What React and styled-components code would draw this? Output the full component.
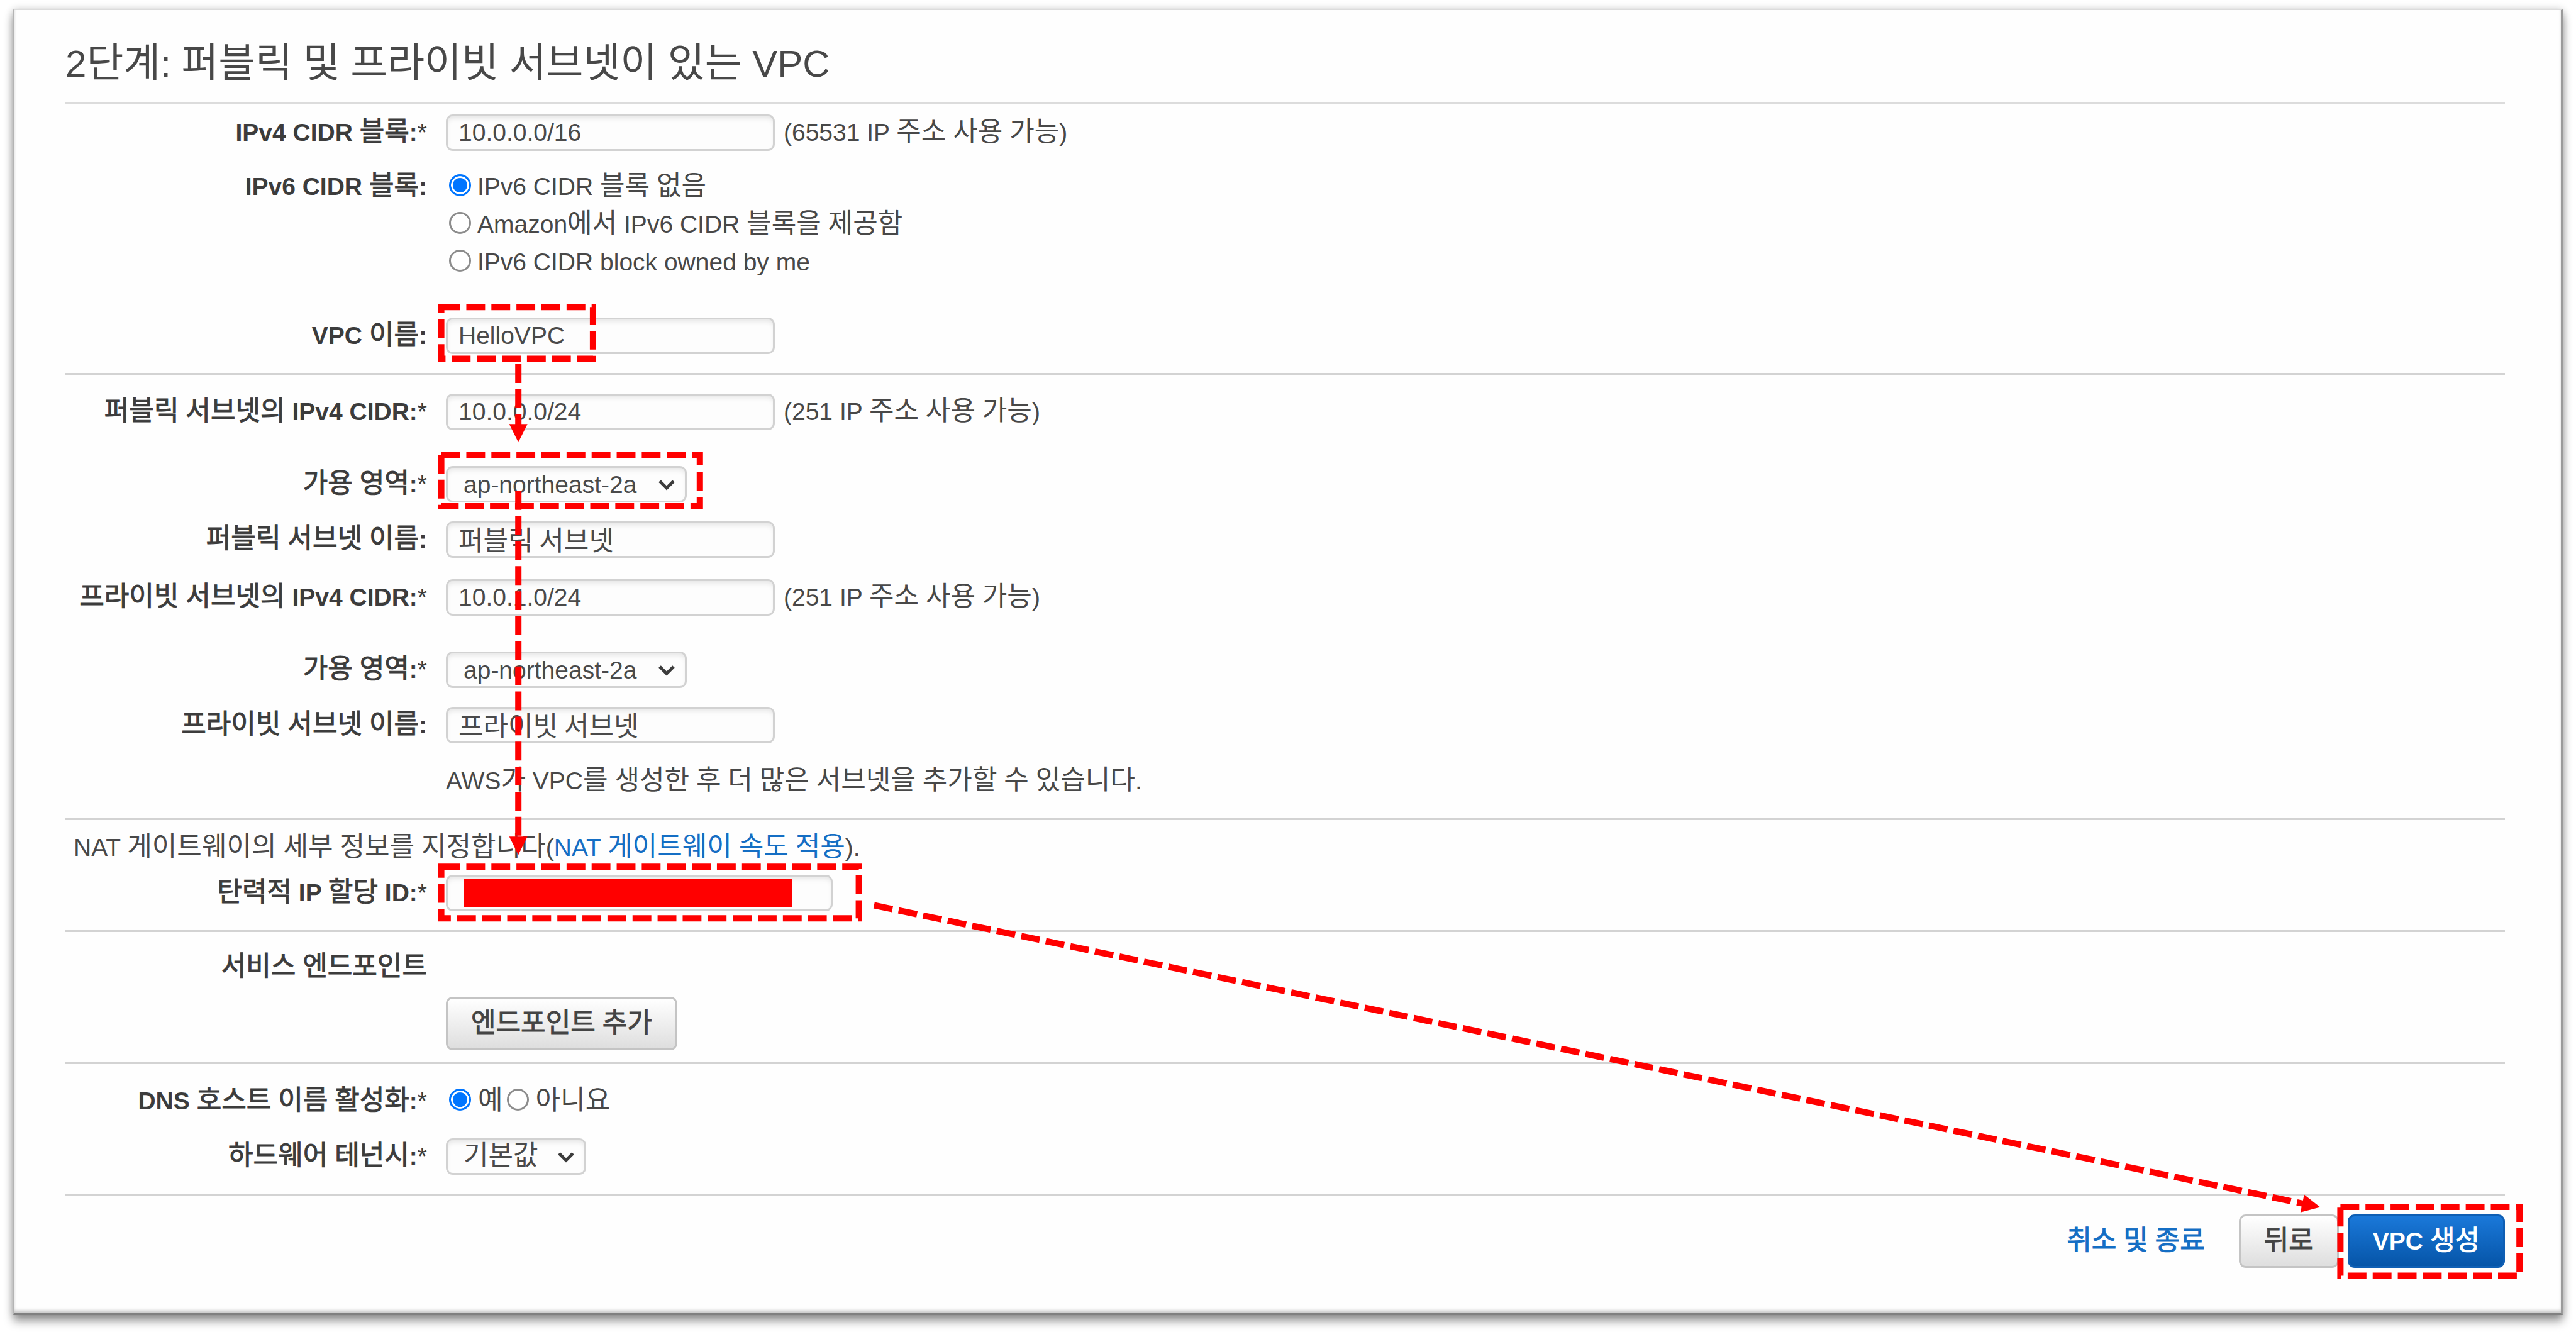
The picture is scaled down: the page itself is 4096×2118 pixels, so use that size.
import React, { useId } from "react";
import styled, { createGlobalStyle } from "styled-components";

const LATIN = `"Liberation Sans", Arial, "Noto Sans CJK KR", sans-serif`;
const HANGUL = `"Noto Sans CJK KR", sans-serif`;
const RED = "#ff0000";

const GlobalStyle = createGlobalStyle`
  *, *::before, *::after { box-sizing: border-box; }
  body {
    --hangul-size: 43px;
    margin: 0;
    background: #fff;
    color: #484848;
    font-family: ${LATIN};
    font-size: 39px;
    line-height: 58px;
  }
`;

const Page = styled.div`
  position: relative;
  display: flex;
  min-height: 100vh;
  padding: 15px 21px 27px;
  overflow: hidden;
`;

const Panel = styled.main`
  flex: 1;
  padding: 46px 89px 0 81px;
  background: #fefefe;
  border: 1px solid #dcdcdc;
  border-left: 2px solid #b4b4b4;
  border-right: 3px solid #9a9a9a;
  border-bottom: 3px solid #808080;
  box-shadow:
    0 10px 14px rgba(0, 0, 0, 0.38),
    0 0 12px rgba(0, 0, 0, 0.2),
    inset 0 -5px 5px -1px rgba(0, 0, 0, 0.22);
`;

const Hangul = styled.span`
  font-family: ${HANGUL};
  font-size: var(--hangul-size);
  font-weight: 400;
  line-height: 1;
  -webkit-text-stroke: ${(p) => (p.$strong ? "1px currentColor" : "0")};
`;

const Title = styled.h1`
  --hangul-size: 64px;
  margin: 0;
  padding-bottom: 20px;
  border-bottom: 3px solid #dcdcdc;
  font-size: 60px;
  font-weight: 400;
  line-height: 80px;
`;

const Section = styled.section`
  display: flex;
  flex-direction: column;
  padding: ${(p) => p.$top || 30}px 0 ${(p) => p.$bottom || 30}px;
  border-bottom: 3px solid #d3d3d3;
`;

const RowGrid = styled.div`
  display: grid;
  grid-template-columns: 575px 1fr;
  column-gap: 30px;
  align-items: start;
  margin-top: ${(p) => p.$gap || 0}px;
`;

const Caption = styled.label`
  grid-column: 1;
  text-align: right;
  font-weight: 700;
  color: #3c3c3c;
  line-height: ${(p) => p.$line || 58}px;
`;

const Star = styled.span`
  font-weight: 400;
`;

const Field = styled.div`
  grid-column: 2;
  display: flex;
  align-items: center;
  gap: 14px;
`;

const boxed = `
  height: 58px;
  margin: 0;
  border: 3px solid #d2d2d2;
  border-radius: 11px;
  background: #fdfdfd;
  box-shadow: inset 0 6px 8px -3px rgba(0, 0, 0, 0.1);
`;

const TextInput = styled.input`
  ${boxed}
  width: ${(p) => (p.$wide ? 615 : 523)}px;
  padding: 0 17px ${(p) => (p.$hangul ? 4 : 0)}px;
  color: #4a4a4a;
  font-family: ${(p) => (p.$hangul ? HANGUL : LATIN)};
  font-size: ${(p) => (p.$hangul ? 43 : 39)}px;
`;

const SelectWrap = styled.div`
  ${boxed}
  display: grid;
  width: ${(p) => (p.$short ? 223 : 383)}px;
  grid-template-rows: 52px;
  align-items: center;

  & > * { grid-area: 1 / 1; }
`;

const SelectBox = styled.select`
  align-self: end;
  width: 100%;
  height: ${(p) => (p.$hangul ? 64 : 52)}px;
  padding: 0 25px;
  border: 0;
  background: transparent;
  appearance: none;
  color: #4a4a4a;
  font-family: ${(p) => (p.$hangul ? HANGUL : LATIN)};
  font-size: ${(p) => (p.$hangul ? 43 : 39)}px;
`;

const Chevron = styled.svg`
  justify-self: end;
  width: 28px;
  height: 20px;
  margin-right: 15px;
  margin-top: 2px;
  pointer-events: none;
`;

const RadioList = styled.div`
  grid-column: 2;
  display: flex;
  flex-direction: ${(p) => (p.$inline ? "row" : "column")};
  padding-left: 5px;
  gap: ${(p) => (p.$inline ? 6 : 0)}px;
`;

const RadioLabel = styled.label`
  display: flex;
  align-items: center;
  gap: ${(p) => (p.$tight ? 11 : 10)}px;
  line-height: ${(p) => (p.$tight ? 58 : 60)}px;
`;

const Radio = styled.input.attrs({ type: "radio" })`
  flex: none;
  appearance: none;
  width: 35px;
  height: 35px;
  margin: 0 0 6px;
  border: 3px solid #8c8c8c;
  border-radius: 50%;
  background: #fff;

  &:checked {
    border-color: #0075ff;
    background: #0075ff;
    box-shadow: inset 0 0 0 3px #fff;
  }
`;

const Note = styled.p`
  grid-column: 2;
  margin: 0;
`;

const NatNote = styled.p`
  margin: 0;
  padding-left: 13px;
`;

const Link = styled.a`
  color: #146ec4;
  text-decoration: none;
`;

const Button = styled.button`
  height: 85px;
  padding: 0 37px;
  border: 3px solid ${(p) => (p.$primary ? "#0f5fb4" : "#c4c4c4")};
  border-radius: 11px;
  background: ${(p) =>
    p.$primary
      ? "linear-gradient(#1a78d9, #0655a8)"
      : "linear-gradient(#ffffff, #dedede)"};
  color: ${(p) => (p.$primary ? "#fff" : "#444")};
  font-family: ${LATIN};
  font-size: 39px;
  font-weight: 700;
  line-height: 58px;
  white-space: nowrap;
`;

const Footer = styled.footer`
  display: flex;
  justify-content: flex-end;
  align-items: center;
  padding-top: 30px;
  gap: 14px;
`;

const Cancel = styled.div`
  margin-right: 40px;
`;

const Overlay = styled.svg`
  position: absolute;
  top: 0;
  left: 0;
  width: 100%;
  height: auto;
  pointer-events: none;
`;

function Text({ strong, children }) {
  return children
    .split(/([\uac00-\ud7a3]+)/)
    .map((part, i) =>
      i % 2 ? <Hangul key={i} $strong={strong}>{part}</Hangul> : part
    );
}

function Row({ label, required, gap, line, group, children }) {
  const id = useId();
  return (
    <RowGrid $gap={gap}>
      <Caption
        as={group ? "span" : "label"}
        id={`${id}-label`}
        htmlFor={group ? undefined : id}
        $line={line}
      >
        <Text strong>{label}</Text>
        {required && <Star>*</Star>}
      </Caption>
      {children(id)}
    </RowGrid>
  );
}

function InputRow({ value, hangul, wide, hint, ...row }) {
  return (
    <Row {...row}>
      {(id) => (
        <Field>
          <TextInput id={id} type="text" defaultValue={value} $hangul={hangul} $wide={wide} />
          {hint && <span><Text>{hint}</Text></span>}
        </Field>
      )}
    </Row>
  );
}

function SelectRow({ value, short, ...row }) {
  return (
    <Row {...row}>
      {(id) => (
        <SelectWrap $short={short}>
          <SelectBox id={id} $hangul={short}>
            <option>{value}</option>
          </SelectBox>
          <Chevron viewBox="0 0 28 20" aria-hidden="true">
            <path d="M3 4 L14 15 L25 4" fill="none" stroke="#3c3c3c" strokeWidth="5" />
          </Chevron>
        </SelectWrap>
      )}
    </Row>
  );
}

function RadioRow({ name, options, inline, ...row }) {
  return (
    <Row {...row} group>
      {(id) => (
        <RadioList role="radiogroup" aria-labelledby={`${id}-label`} $inline={inline}>
          {options.map((option, i) => (
            <RadioLabel key={option} $tight={inline}>
              <Radio name={name} defaultChecked={i === 0} />
              <span><Text>{option}</Text></span>
            </RadioLabel>
          ))}
        </RadioList>
      )}
    </Row>
  );
}

function DashBox({ x1, y1, x2, y2 }) {
  return <rect x={x1} y={y1} width={x2 - x1} height={y2 - y1} />;
}

function Arrow({ from, to }) {
  const dx = to[0] - from[0];
  const dy = to[1] - from[1];
  const length = Math.hypot(dx, dy);
  const angle = (Math.atan2(dy, dx) * 180) / Math.PI;
  return (
    <g transform={`translate(${from[0]} ${from[1]}) rotate(${angle})`}>
      <line x1="0" y1="0" x2={length - 26} y2="0" />
      <path
        d={`M${length} 0 L${length - 29} -14.5 V14.5 Z`}
        fill={RED}
        stroke="none"
      />
    </g>
  );
}

export default function App() {
  return (
    <>
      <GlobalStyle />
      <Page>
        <Panel>
          <Title><Text>2단계: 퍼블릭 및 프라이빗 서브넷이 있는 VPC</Text></Title>

          <Section $top={17}>
            <InputRow label="IPv4 CIDR 블록:" required value="10.0.0.0/16" hint="(65531 IP 주소 사용 가능)" />
            <RadioRow
              label="IPv6 CIDR 블록:"
              name="ipv6"
              gap={27}
              line={60}
              options={[
                "IPv6 CIDR 블록 없음",
                "Amazon에서 IPv6 CIDR 블록을 제공함",
                "IPv6 CIDR block owned by me",
              ]}
            />
            <InputRow label="VPC 이름:" value="HelloVPC" gap={58} />
          </Section>

          <Section>
            <InputRow label="퍼블릭 서브넷의 IPv4 CIDR:" required value="10.0.0.0/24" hint="(251 IP 주소 사용 가능)" />
            <SelectRow label="가용 영역:" required value="ap-northeast-2a" gap={57} />
            <InputRow label="퍼블릭 서브넷 이름:" value="퍼블릭 서브넷" hangul gap={30} />
            <InputRow label="프라이빗 서브넷의 IPv4 CIDR:" required value="10.0.1.0/24" hint="(251 IP 주소 사용 가능)" gap={34} />
            <SelectRow label="가용 영역:" required value="ap-northeast-2a" gap={57} />
            <InputRow label="프라이빗 서브넷 이름:" value="프라이빗 서브넷" hangul gap={30} />
            <RowGrid $gap={31}>
              <Note><Text>AWS가 VPC를 생성한 후 더 많은 서브넷을 추가할 수 있습니다.</Text></Note>
            </RowGrid>
          </Section>

          <Section $top={15}>
            <NatNote>
              <Text>NAT 게이트웨이의 세부 정보를 지정합니다(</Text>
              <Link href="#pricing"><Text>NAT 게이트웨이 속도 적용</Text></Link>).
            </NatNote>
            <InputRow label="탄력적 IP 할당 ID:" required value="" wide gap={14} />
          </Section>

          <Section $top={27} $bottom={19}>
            <Row label="서비스 엔드포인트" group>{() => null}</Row>
            <RowGrid $gap={18}>
              <Field>
                <Button type="button"><Text strong>엔드포인트 추가</Text></Button>
              </Field>
            </RowGrid>
          </Section>

          <Section>
            <RadioRow label="DNS 호스트 이름 활성화:" required name="dns" inline options={["예", "아니요"]} />
            <SelectRow label="하드웨어 테넌시:" required value="기본값" short gap={30} />
          </Section>

          <Footer>
            <Cancel><Link href="#cancel"><Text strong>취소 및 종료</Text></Link></Cancel>
            <Button type="button"><Text strong>뒤로</Text></Button>
            <Button type="submit" $primary><Text strong>VPC 생성</Text></Button>
          </Footer>
        </Panel>

        <Overlay viewBox="0 0 4096 2118" aria-hidden="true">
          <rect x="738" y="1398" width="522" height="45" fill={RED} />
          <g fill="none" stroke={RED} strokeWidth="10" strokeDasharray="29.9 9.95">
            <DashBox x1={701.6} y1={488.3} x2={942.9} y2={570.4} />
            <DashBox x1={701.6} y1={722.9} x2={1112.8} y2={804.9} />
            <DashBox x1={701.6} y1={1378.2} x2={1365.6} y2={1460.2} />
            <DashBox x1={3721.4} y1={1919} x2={4006.2} y2={2028.4} />
            <Arrow from={[824.2, 579]} to={[824.2, 703.3]} />
            <Arrow from={[824.2, 780.8]} to={[824.2, 1359.2]} />
            <Arrow from={[1389.8, 1439.5]} to={[3689.2, 1919.6]} />
          </g>
        </Overlay>
      </Page>
    </>
  );
}
